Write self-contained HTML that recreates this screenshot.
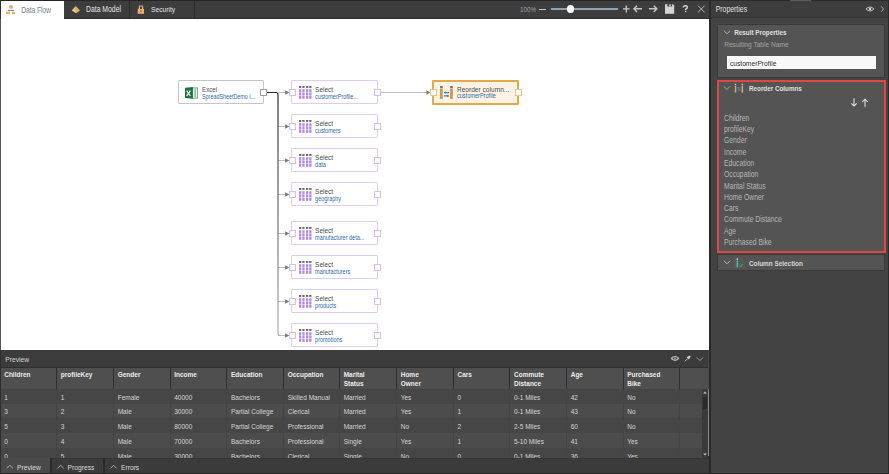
<!DOCTYPE html>
<html><head><meta charset="utf-8">
<style>
*{box-sizing:border-box;margin:0;padding:0}
html,body{width:889px;height:474px;overflow:hidden;background:#2d2d2d;font-family:"Liberation Sans",sans-serif}
.a{position:absolute}
.t{position:absolute;white-space:nowrap;line-height:1}
.node{position:absolute;background:#fff;border:1px solid #dccdf2;border-radius:1px}
.port{position:absolute;width:7px;height:7px;background:#fff;border:1px solid #9a9a9a}
.pp{border-color:#d3c0f0}
</style></head><body>
<div class="a" style="left:0px;top:0px;width:709px;height:19px;background:#3d3d3d;"></div>
<div class="a" style="left:0px;top:0px;width:709px;height:1px;background:#262626;"></div>
<div class="a" style="left:0px;top:18px;width:709px;height:1px;background:#2c2c2c;"></div>
<div class="a" style="left:1px;top:1px;width:63px;height:18px;background:#fff;"></div>
<div class="a" style="left:129px;top:1px;width:1px;height:17px;background:#2b2b2b;"></div>
<div class="a" style="left:194px;top:1px;width:1px;height:17px;background:#2b2b2b;"></div>
<svg class="a" style="left:5px;top:4px" width="12" height="11" viewBox="0 0 12 11">
 <circle cx="6" cy="2.9" r="1.95" fill="#eaa862"/>
 <rect x="2.8" y="5.8" width="6.2" height="1.3" fill="#8a8a8a"/>
 <rect x="1" y="7.8" width="3.9" height="2.2" fill="#eaa862"/>
 <rect x="7" y="7.8" width="3" height="2.2" fill="#eaa862"/>
</svg>
<div class="t" style="left:21.20px;top:7.51px;font-size:6.90px;color:#7a8593;font-weight:400;transform:scaleY(1.2);transform-origin:0 5.84px;letter-spacing:-0.15px">Data Flow</div>
<svg class="a" style="left:71px;top:5px" width="10" height="10" viewBox="0 0 10 10">
 <path d="M4.8 0.9 L0.7 5.4 L5.1 8.3 Z" fill="#eec687"/><path d="M4.8 0.9 L5.1 8.3 L9 5.4 Z" fill="#ddae70"/>
</svg>
<div class="t" style="left:86.00px;top:7.05px;font-size:6.85px;color:#e4e4e4;font-weight:400;transform:scaleY(1.2);transform-origin:0 5.80px;">Data Model</div>
<svg class="a" style="left:137px;top:5px" width="8" height="9" viewBox="0 0 8 9">
 <path d="M2.4 4 V1.7 Q2.4 1 3.1 1 H4.9 Q5.6 1 5.6 1.7 V4" stroke="#e8b070" stroke-width="1.2" fill="none"/>
 <rect x="0.7" y="3.8" width="6.3" height="5" fill="#e8b070"/><rect x="3.3" y="5.2" width="1.1" height="1.7" fill="#7a5a36"/>
</svg>
<div class="t" style="left:151.00px;top:7.18px;font-size:6.70px;color:#e4e4e4;font-weight:400;transform:scaleY(1.2);transform-origin:0 5.67px;">Security</div>
<div class="t" style="left:520.00px;top:7.02px;font-size:6.30px;color:#97a6b6;font-weight:400;transform:scaleY(1.2);transform-origin:0 5.33px;">100%</div>
<div class="a" style="left:539px;top:8.5px;width:7px;height:1.3px;background:#c4c4c4;"></div>
<div class="a" style="left:551px;top:8.3px;width:67px;height:1.7px;background:#8fa2b3;"></div>
<div class="a" style="left:566.6px;top:5.4px;width:7.4px;height:7.4px;border-radius:50%;background:#fff"></div>
<svg class="a" style="left:620px;top:3px" width="90" height="13" viewBox="0 0 90 13">
 <path d="M3 5.8 H9.6 M6.3 2.4 V9.6" stroke="#c8c8c8" stroke-width="1.3"/>
 <path d="M14 5.8 H22 M17 2.7 L14 5.8 L17 8.9" stroke="#c4c4c4" stroke-width="1.5" fill="none"/>
 <path d="M28.9 5.8 H36.8 M33.8 2.7 L36.8 5.8 L33.8 8.9" stroke="#c4c4c4" stroke-width="1.5" fill="none"/>
 <path d="M45 1.2 H53 L54.2 2.4 V10.8 H45 Z" fill="#d4d4d4"/><rect x="47.3" y="1.2" width="4.8" height="2.3" fill="#3d3d3d"/><rect x="49.2" y="1.5" width="1.6" height="1.8" fill="#d4d4d4"/>
 <path d="M63.3 4.5 Q63.3 2.7 65.3 2.7 Q67.3 2.7 67.3 4.4 Q67.3 5.5 65.6 6.2 V7.3" stroke="#d0d0d0" stroke-width="1.4" fill="none"/><rect x="64.9" y="8" width="1.5" height="1.2" fill="#d0d0d0"/>
 <path d="M78 2.7 L84.6 9.3 M84.6 2.7 L78 9.3" stroke="#c0c0c0" stroke-width="0.9"/>
</svg>
<div class="a" style="left:0px;top:19px;width:1px;height:331px;background:#3b3b3b;"></div>
<div class="a" style="left:1px;top:19px;width:708px;height:331px;background:#fff;"></div>
<svg class="a" style="left:0;top:0" width="709" height="474" viewBox="0 0 709 474">
<line x1="278" y1="92.5" x2="286" y2="92.5" stroke="#bdbdbd" stroke-width="1"/>
<path d="M285.2 90.2 L289.2 92.5 L285.2 94.8 Z" fill="#777"/>
<line x1="278" y1="126.5" x2="286" y2="126.5" stroke="#bdbdbd" stroke-width="1"/>
<path d="M285.2 124.2 L289.2 126.5 L285.2 128.8 Z" fill="#777"/>
<line x1="278" y1="160.5" x2="286" y2="160.5" stroke="#bdbdbd" stroke-width="1"/>
<path d="M285.2 158.2 L289.2 160.5 L285.2 162.8 Z" fill="#777"/>
<line x1="278" y1="194.5" x2="286" y2="194.5" stroke="#bdbdbd" stroke-width="1"/>
<path d="M285.2 192.2 L289.2 194.5 L285.2 196.8 Z" fill="#777"/>
<line x1="278" y1="233.5" x2="286" y2="233.5" stroke="#bdbdbd" stroke-width="1"/>
<path d="M285.2 231.2 L289.2 233.5 L285.2 235.8 Z" fill="#777"/>
<line x1="278" y1="267.5" x2="286" y2="267.5" stroke="#bdbdbd" stroke-width="1"/>
<path d="M285.2 265.2 L289.2 267.5 L285.2 269.8 Z" fill="#777"/>
<line x1="278" y1="301.5" x2="286" y2="301.5" stroke="#bdbdbd" stroke-width="1"/>
<path d="M285.2 299.2 L289.2 301.5 L285.2 303.8 Z" fill="#777"/>
<line x1="278" y1="335.5" x2="286" y2="335.5" stroke="#bdbdbd" stroke-width="1"/>
<path d="M285.2 333.2 L289.2 335.5 L285.2 337.8 Z" fill="#777"/>
<defs><linearGradient id="vg" gradientUnits="userSpaceOnUse" x1="0" y1="92" x2="0" y2="336"><stop offset="0" stop-color="#2a2a2a"/><stop offset="0.35" stop-color="#5a5a5a"/><stop offset="1" stop-color="#b0b0b0"/></linearGradient></defs>
<path d="M266.5 92.5 H276 Q278 92.5 278 94.5 V333.5 Q278 335.5 280 335.5" fill="none" stroke="url(#vg)" stroke-width="1.2"/>
<line x1="381" y1="92.5" x2="427" y2="92.5" stroke="#bdbdbd" stroke-width="1"/>
<path d="M426.5 90.2 L430.3 92.5 L426.5 94.8 Z" fill="#777"/>
</svg>
<div class="node sel" style="left:291px;top:80px;width:87px;height:24px"><svg class="a" style="left:6.7px;top:5.1px" width="14" height="14" viewBox="0 0 14 14">
 <g fill="#6a6a6a"><rect x="0" y="0" width="2.3" height="1.9"/><rect x="3.3" y="0" width="2.3" height="1.9"/><rect x="7" y="0" width="2.3" height="1.9"/><rect x="10.2" y="0" width="2.3" height="1.9"/></g>
 <g fill="#b28ade"><rect x="0" y="3.2" width="2.3" height="9.6"/><rect x="3.3" y="3.2" width="2.3" height="9.6"/><rect x="7" y="3.2" width="2.3" height="9.6"/><rect x="10.2" y="3.2" width="2.3" height="9.6"/></g>
 <g fill="#fff" opacity="0.55"><rect x="0" y="5.8" width="13" height="0.8"/><rect x="0" y="9" width="13" height="0.8"/></g>
</svg></div>
<div class="t" style="left:315.10px;top:86.95px;font-size:6.50px;color:#4a4a4a;font-weight:400;transform:scaleY(1.2);transform-origin:0 5.50px;">Select</div>
<div class="t" style="left:315.10px;top:94.79px;font-size:5.50px;color:#2e6ba6;font-weight:400;transform:scaleY(1.2);transform-origin:0 4.66px;">customerProfile...</div>
<div class="port pp" style="left:289px;top:89px"></div><div class="port pp" style="left:374px;top:89px"></div>
<div class="node sel" style="left:291px;top:114px;width:87px;height:24px"><svg class="a" style="left:6.7px;top:5.1px" width="14" height="14" viewBox="0 0 14 14">
 <g fill="#6a6a6a"><rect x="0" y="0" width="2.3" height="1.9"/><rect x="3.3" y="0" width="2.3" height="1.9"/><rect x="7" y="0" width="2.3" height="1.9"/><rect x="10.2" y="0" width="2.3" height="1.9"/></g>
 <g fill="#b28ade"><rect x="0" y="3.2" width="2.3" height="9.6"/><rect x="3.3" y="3.2" width="2.3" height="9.6"/><rect x="7" y="3.2" width="2.3" height="9.6"/><rect x="10.2" y="3.2" width="2.3" height="9.6"/></g>
 <g fill="#fff" opacity="0.55"><rect x="0" y="5.8" width="13" height="0.8"/><rect x="0" y="9" width="13" height="0.8"/></g>
</svg></div>
<div class="t" style="left:315.10px;top:120.95px;font-size:6.50px;color:#4a4a4a;font-weight:400;transform:scaleY(1.2);transform-origin:0 5.50px;">Select</div>
<div class="t" style="left:315.10px;top:128.79px;font-size:5.50px;color:#2e6ba6;font-weight:400;transform:scaleY(1.2);transform-origin:0 4.66px;">customers</div>
<div class="port pp" style="left:289px;top:123px"></div><div class="port pp" style="left:374px;top:123px"></div>
<div class="node sel" style="left:291px;top:148px;width:87px;height:24px"><svg class="a" style="left:6.7px;top:5.1px" width="14" height="14" viewBox="0 0 14 14">
 <g fill="#6a6a6a"><rect x="0" y="0" width="2.3" height="1.9"/><rect x="3.3" y="0" width="2.3" height="1.9"/><rect x="7" y="0" width="2.3" height="1.9"/><rect x="10.2" y="0" width="2.3" height="1.9"/></g>
 <g fill="#b28ade"><rect x="0" y="3.2" width="2.3" height="9.6"/><rect x="3.3" y="3.2" width="2.3" height="9.6"/><rect x="7" y="3.2" width="2.3" height="9.6"/><rect x="10.2" y="3.2" width="2.3" height="9.6"/></g>
 <g fill="#fff" opacity="0.55"><rect x="0" y="5.8" width="13" height="0.8"/><rect x="0" y="9" width="13" height="0.8"/></g>
</svg></div>
<div class="t" style="left:315.10px;top:154.95px;font-size:6.50px;color:#4a4a4a;font-weight:400;transform:scaleY(1.2);transform-origin:0 5.50px;">Select</div>
<div class="t" style="left:315.10px;top:162.79px;font-size:5.50px;color:#2e6ba6;font-weight:400;transform:scaleY(1.2);transform-origin:0 4.66px;">data</div>
<div class="port pp" style="left:289px;top:157px"></div><div class="port pp" style="left:374px;top:157px"></div>
<div class="node sel" style="left:291px;top:182px;width:87px;height:24px"><svg class="a" style="left:6.7px;top:5.1px" width="14" height="14" viewBox="0 0 14 14">
 <g fill="#6a6a6a"><rect x="0" y="0" width="2.3" height="1.9"/><rect x="3.3" y="0" width="2.3" height="1.9"/><rect x="7" y="0" width="2.3" height="1.9"/><rect x="10.2" y="0" width="2.3" height="1.9"/></g>
 <g fill="#b28ade"><rect x="0" y="3.2" width="2.3" height="9.6"/><rect x="3.3" y="3.2" width="2.3" height="9.6"/><rect x="7" y="3.2" width="2.3" height="9.6"/><rect x="10.2" y="3.2" width="2.3" height="9.6"/></g>
 <g fill="#fff" opacity="0.55"><rect x="0" y="5.8" width="13" height="0.8"/><rect x="0" y="9" width="13" height="0.8"/></g>
</svg></div>
<div class="t" style="left:315.10px;top:188.95px;font-size:6.50px;color:#4a4a4a;font-weight:400;transform:scaleY(1.2);transform-origin:0 5.50px;">Select</div>
<div class="t" style="left:315.10px;top:196.79px;font-size:5.50px;color:#2e6ba6;font-weight:400;transform:scaleY(1.2);transform-origin:0 4.66px;">geography</div>
<div class="port pp" style="left:289px;top:191px"></div><div class="port pp" style="left:374px;top:191px"></div>
<div class="node sel" style="left:291px;top:221px;width:87px;height:24px"><svg class="a" style="left:6.7px;top:5.1px" width="14" height="14" viewBox="0 0 14 14">
 <g fill="#6a6a6a"><rect x="0" y="0" width="2.3" height="1.9"/><rect x="3.3" y="0" width="2.3" height="1.9"/><rect x="7" y="0" width="2.3" height="1.9"/><rect x="10.2" y="0" width="2.3" height="1.9"/></g>
 <g fill="#b28ade"><rect x="0" y="3.2" width="2.3" height="9.6"/><rect x="3.3" y="3.2" width="2.3" height="9.6"/><rect x="7" y="3.2" width="2.3" height="9.6"/><rect x="10.2" y="3.2" width="2.3" height="9.6"/></g>
 <g fill="#fff" opacity="0.55"><rect x="0" y="5.8" width="13" height="0.8"/><rect x="0" y="9" width="13" height="0.8"/></g>
</svg></div>
<div class="t" style="left:315.10px;top:227.95px;font-size:6.50px;color:#4a4a4a;font-weight:400;transform:scaleY(1.2);transform-origin:0 5.50px;">Select</div>
<div class="t" style="left:315.10px;top:235.79px;font-size:5.50px;color:#2e6ba6;font-weight:400;transform:scaleY(1.2);transform-origin:0 4.66px;">manufacturer deta...</div>
<div class="port pp" style="left:289px;top:230px"></div><div class="port pp" style="left:374px;top:230px"></div>
<div class="node sel" style="left:291px;top:255px;width:87px;height:24px"><svg class="a" style="left:6.7px;top:5.1px" width="14" height="14" viewBox="0 0 14 14">
 <g fill="#6a6a6a"><rect x="0" y="0" width="2.3" height="1.9"/><rect x="3.3" y="0" width="2.3" height="1.9"/><rect x="7" y="0" width="2.3" height="1.9"/><rect x="10.2" y="0" width="2.3" height="1.9"/></g>
 <g fill="#b28ade"><rect x="0" y="3.2" width="2.3" height="9.6"/><rect x="3.3" y="3.2" width="2.3" height="9.6"/><rect x="7" y="3.2" width="2.3" height="9.6"/><rect x="10.2" y="3.2" width="2.3" height="9.6"/></g>
 <g fill="#fff" opacity="0.55"><rect x="0" y="5.8" width="13" height="0.8"/><rect x="0" y="9" width="13" height="0.8"/></g>
</svg></div>
<div class="t" style="left:315.10px;top:261.95px;font-size:6.50px;color:#4a4a4a;font-weight:400;transform:scaleY(1.2);transform-origin:0 5.50px;">Select</div>
<div class="t" style="left:315.10px;top:269.79px;font-size:5.50px;color:#2e6ba6;font-weight:400;transform:scaleY(1.2);transform-origin:0 4.66px;">manufacturers</div>
<div class="port pp" style="left:289px;top:264px"></div><div class="port pp" style="left:374px;top:264px"></div>
<div class="node sel" style="left:291px;top:289px;width:87px;height:24px"><svg class="a" style="left:6.7px;top:5.1px" width="14" height="14" viewBox="0 0 14 14">
 <g fill="#6a6a6a"><rect x="0" y="0" width="2.3" height="1.9"/><rect x="3.3" y="0" width="2.3" height="1.9"/><rect x="7" y="0" width="2.3" height="1.9"/><rect x="10.2" y="0" width="2.3" height="1.9"/></g>
 <g fill="#b28ade"><rect x="0" y="3.2" width="2.3" height="9.6"/><rect x="3.3" y="3.2" width="2.3" height="9.6"/><rect x="7" y="3.2" width="2.3" height="9.6"/><rect x="10.2" y="3.2" width="2.3" height="9.6"/></g>
 <g fill="#fff" opacity="0.55"><rect x="0" y="5.8" width="13" height="0.8"/><rect x="0" y="9" width="13" height="0.8"/></g>
</svg></div>
<div class="t" style="left:315.10px;top:295.95px;font-size:6.50px;color:#4a4a4a;font-weight:400;transform:scaleY(1.2);transform-origin:0 5.50px;">Select</div>
<div class="t" style="left:315.10px;top:303.79px;font-size:5.50px;color:#2e6ba6;font-weight:400;transform:scaleY(1.2);transform-origin:0 4.66px;">products</div>
<div class="port pp" style="left:289px;top:298px"></div><div class="port pp" style="left:374px;top:298px"></div>
<div class="node sel" style="left:291px;top:323px;width:87px;height:24px"><svg class="a" style="left:6.7px;top:5.1px" width="14" height="14" viewBox="0 0 14 14">
 <g fill="#6a6a6a"><rect x="0" y="0" width="2.3" height="1.9"/><rect x="3.3" y="0" width="2.3" height="1.9"/><rect x="7" y="0" width="2.3" height="1.9"/><rect x="10.2" y="0" width="2.3" height="1.9"/></g>
 <g fill="#b28ade"><rect x="0" y="3.2" width="2.3" height="9.6"/><rect x="3.3" y="3.2" width="2.3" height="9.6"/><rect x="7" y="3.2" width="2.3" height="9.6"/><rect x="10.2" y="3.2" width="2.3" height="9.6"/></g>
 <g fill="#fff" opacity="0.55"><rect x="0" y="5.8" width="13" height="0.8"/><rect x="0" y="9" width="13" height="0.8"/></g>
</svg></div>
<div class="t" style="left:315.10px;top:329.95px;font-size:6.50px;color:#4a4a4a;font-weight:400;transform:scaleY(1.2);transform-origin:0 5.50px;">Select</div>
<div class="t" style="left:315.10px;top:337.79px;font-size:5.50px;color:#2e6ba6;font-weight:400;transform:scaleY(1.2);transform-origin:0 4.66px;">promotions</div>
<div class="port pp" style="left:289px;top:332px"></div><div class="port pp" style="left:374px;top:332px"></div>
<div class="node" style="left:178px;top:80px;width:86px;height:24px;border-color:#c6c6c6">
 <svg class="a" style="left:6px;top:5.5px" width="14" height="13" viewBox="0 0 14 13">
  <rect x="7.4" y="0.9" width="5.3" height="10.2" fill="#e3efe7" stroke="#4f8f6a" stroke-width="0.7"/>
  <rect x="9.3" y="1.6" width="1.6" height="8.8" fill="#9cc3ab"/>
  <path d="M0 0.8 L7.8 0 V11.8 L0 11 Z" fill="#217346"/>
  <path d="M1.7 3.7 L5.4 8.9 M5.4 3.7 L1.7 8.9" stroke="#fff" stroke-width="1.15"/>
 </svg></div>
<div class="t" style="left:202.00px;top:87.10px;font-size:6.20px;color:#505050;font-weight:400;transform:scaleY(1.2);transform-origin:0 5.25px;">Excel</div>
<div class="t" style="left:202.00px;top:94.68px;font-size:5.40px;color:#2e6ba6;font-weight:400;transform:scaleY(1.2);transform-origin:0 4.57px;">SpreadSheetDemo I...</div>
<div class="port" style="left:260px;top:89px;border-color:#a0a0a0"></div>
<div class="node" style="left:432px;top:80px;width:87px;height:25px;background:#fdf3e4;border:2px solid #e6a84c">
 <svg class="a" style="left:6px;top:4px" width="15" height="14" viewBox="0 0 15 14">
  <rect x="0" y="0" width="2.75" height="2.4" fill="#7a7a7a"/><rect x="10.1" y="0" width="2.8" height="2.4" fill="#7a7a7a"/>
  <rect x="0" y="3" width="2.75" height="9.9" fill="#d9944c"/><rect x="10.1" y="3" width="2.8" height="9.9" fill="#d9944c"/>
  <path d="M4.6 6.6 H9.1 M3.9 9.9 H8.4" stroke="#2b88d0" stroke-width="1.2"/>
  <path d="M3.7 6.6 L5.8 5.3 V7.9 Z M9.3 9.9 L7.2 8.6 V11.2 Z" fill="#2b88d0"/>
 </svg></div>
<div class="t" style="left:456.90px;top:86.66px;font-size:6.60px;color:#505050;font-weight:400;transform:scaleY(1.2);transform-origin:0 5.59px;">Reorder column...</div>
<div class="t" style="left:456.90px;top:94.31px;font-size:5.60px;color:#2e6ba6;font-weight:400;transform:scaleY(1.2);transform-origin:0 4.74px;">customerProfile</div>
<div class="port" style="left:430px;top:89px;border-color:#eec48a"></div>
<div class="port" style="left:515px;top:89px;border-color:#eec48a"></div>
<div class="a" style="left:0px;top:350px;width:709px;height:17px;background:#3c3c3c;"></div>
<div class="a" style="left:0px;top:366.5px;width:709px;height:1.5px;background:#2e2e2e;"></div>
<div class="t" style="left:5.30px;top:356.88px;font-size:6.70px;color:#d4d4d4;font-weight:400;transform:scaleY(1.2);transform-origin:0 5.67px;">Preview</div>
<svg class="a" style="left:668px;top:352px" width="40" height="13" viewBox="0 0 40 13">
 <path d="M2.9 6.4 Q7 2.4 11.1 6.4 Q7 10.4 2.9 6.4 Z" fill="#a8a8a8" stroke="#c8c8c8" stroke-width="0.8"/><ellipse cx="7" cy="6.4" rx="2.3" ry="1.1" fill="#4a4a4a"/><circle cx="7" cy="6.4" r="0.7" fill="#ccc"/>
 <path d="M18.6 5.2 L21.9 3.4 L22.7 4.3 L21 7.5 Z" fill="#cfcfcf"/><path d="M19.9 6.3 L16.9 9.3" stroke="#c8c8c8" stroke-width="0.9"/>
 <path d="M28.7 5.4 L31.9 8.6 L35.1 5.4" stroke="#bcbcbc" stroke-width="0.75" fill="none"/>
</svg>
<div class="a" style="left:0px;top:368px;width:708px;height:21px;background:#4f4f4f;"></div>
<div class="a" style="left:708px;top:350px;width:1px;height:39px;background:#4a4a4a;"></div>
<div class="a" style="left:0;top:389px;width:702px;height:14.7px;background:#464646"></div>
<div class="a" style="left:0;top:403.7px;width:702px;height:14.7px;background:#4c4c4c"></div>
<div class="a" style="left:0;top:418.4px;width:702px;height:14.7px;background:#464646"></div>
<div class="a" style="left:0;top:433.1px;width:702px;height:14.7px;background:#4c4c4c"></div>
<div class="a" style="left:0;top:447.8px;width:702px;height:11px;background:#464646"></div>
<div class="a" style="left:56.0px;top:368px;width:1px;height:21px;background:#2e2e2e"></div>
<div class="a" style="left:56.0px;top:389px;width:1px;height:69px;background:#444444"></div>
<div class="a" style="left:113.0px;top:368px;width:1px;height:21px;background:#2e2e2e"></div>
<div class="a" style="left:113.0px;top:389px;width:1px;height:69px;background:#444444"></div>
<div class="a" style="left:169.5px;top:368px;width:1px;height:21px;background:#2e2e2e"></div>
<div class="a" style="left:169.5px;top:389px;width:1px;height:69px;background:#444444"></div>
<div class="a" style="left:226.3px;top:368px;width:1px;height:21px;background:#2e2e2e"></div>
<div class="a" style="left:226.3px;top:389px;width:1px;height:69px;background:#444444"></div>
<div class="a" style="left:283.0px;top:368px;width:1px;height:21px;background:#2e2e2e"></div>
<div class="a" style="left:283.0px;top:389px;width:1px;height:69px;background:#444444"></div>
<div class="a" style="left:339.0px;top:368px;width:1px;height:21px;background:#2e2e2e"></div>
<div class="a" style="left:339.0px;top:389px;width:1px;height:69px;background:#444444"></div>
<div class="a" style="left:396.0px;top:368px;width:1px;height:21px;background:#2e2e2e"></div>
<div class="a" style="left:396.0px;top:389px;width:1px;height:69px;background:#444444"></div>
<div class="a" style="left:452.8px;top:368px;width:1px;height:21px;background:#2e2e2e"></div>
<div class="a" style="left:452.8px;top:389px;width:1px;height:69px;background:#444444"></div>
<div class="a" style="left:509.3px;top:368px;width:1px;height:21px;background:#2e2e2e"></div>
<div class="a" style="left:509.3px;top:389px;width:1px;height:69px;background:#444444"></div>
<div class="a" style="left:566.0px;top:368px;width:1px;height:21px;background:#2e2e2e"></div>
<div class="a" style="left:566.0px;top:389px;width:1px;height:69px;background:#444444"></div>
<div class="a" style="left:622.5px;top:368px;width:1px;height:21px;background:#2e2e2e"></div>
<div class="a" style="left:622.5px;top:389px;width:1px;height:69px;background:#444444"></div>
<div class="a" style="left:679.2px;top:368px;width:1px;height:21px;background:#2e2e2e"></div>
<div class="a" style="left:679.2px;top:389px;width:1px;height:69px;background:#444444"></div>
<div class="t" style="left:4.20px;top:371.65px;font-size:6.50px;color:#ececec;font-weight:700;transform:scaleY(1.12);transform-origin:0 5.50px;">Children</div>
<div class="t" style="left:60.70px;top:371.65px;font-size:6.50px;color:#ececec;font-weight:700;transform:scaleY(1.12);transform-origin:0 5.50px;">profileKey</div>
<div class="t" style="left:117.70px;top:371.65px;font-size:6.50px;color:#ececec;font-weight:700;transform:scaleY(1.12);transform-origin:0 5.50px;">Gender</div>
<div class="t" style="left:174.20px;top:371.65px;font-size:6.50px;color:#ececec;font-weight:700;transform:scaleY(1.12);transform-origin:0 5.50px;">Income</div>
<div class="t" style="left:231.00px;top:371.65px;font-size:6.50px;color:#ececec;font-weight:700;transform:scaleY(1.12);transform-origin:0 5.50px;">Education</div>
<div class="t" style="left:287.70px;top:371.65px;font-size:6.50px;color:#ececec;font-weight:700;transform:scaleY(1.12);transform-origin:0 5.50px;">Occupation</div>
<div class="t" style="left:343.70px;top:371.65px;font-size:6.50px;color:#ececec;font-weight:700;transform:scaleY(1.12);transform-origin:0 5.50px;">Marital</div>
<div class="t" style="left:343.70px;top:380.75px;font-size:6.50px;color:#ececec;font-weight:700;transform:scaleY(1.12);transform-origin:0 5.50px;">Status</div>
<div class="t" style="left:400.70px;top:371.65px;font-size:6.50px;color:#ececec;font-weight:700;transform:scaleY(1.12);transform-origin:0 5.50px;">Home</div>
<div class="t" style="left:400.70px;top:380.75px;font-size:6.50px;color:#ececec;font-weight:700;transform:scaleY(1.12);transform-origin:0 5.50px;">Owner</div>
<div class="t" style="left:457.50px;top:371.65px;font-size:6.50px;color:#ececec;font-weight:700;transform:scaleY(1.12);transform-origin:0 5.50px;">Cars</div>
<div class="t" style="left:514.00px;top:371.65px;font-size:6.50px;color:#ececec;font-weight:700;transform:scaleY(1.12);transform-origin:0 5.50px;">Commute</div>
<div class="t" style="left:514.00px;top:380.75px;font-size:6.50px;color:#ececec;font-weight:700;transform:scaleY(1.12);transform-origin:0 5.50px;">Distance</div>
<div class="t" style="left:570.70px;top:371.65px;font-size:6.50px;color:#ececec;font-weight:700;transform:scaleY(1.12);transform-origin:0 5.50px;">Age</div>
<div class="t" style="left:627.20px;top:371.65px;font-size:6.50px;color:#ececec;font-weight:700;transform:scaleY(1.12);transform-origin:0 5.50px;">Purchased</div>
<div class="t" style="left:627.20px;top:380.75px;font-size:6.50px;color:#ececec;font-weight:700;transform:scaleY(1.12);transform-origin:0 5.50px;">Bike</div>
<div class="a" style="left:0;top:389px;width:702px;height:69px;overflow:hidden">
<div class="t" style="left:4.20px;top:5.75px;font-size:6.50px;color:#d6d6d6;font-weight:400;transform:scaleY(1.2);transform-origin:0 5.50px;">1</div>
<div class="t" style="left:60.70px;top:5.75px;font-size:6.50px;color:#d6d6d6;font-weight:400;transform:scaleY(1.2);transform-origin:0 5.50px;">1</div>
<div class="t" style="left:117.70px;top:5.75px;font-size:6.50px;color:#d6d6d6;font-weight:400;transform:scaleY(1.2);transform-origin:0 5.50px;">Female</div>
<div class="t" style="left:174.20px;top:5.75px;font-size:6.50px;color:#d6d6d6;font-weight:400;transform:scaleY(1.2);transform-origin:0 5.50px;">40000</div>
<div class="t" style="left:231.00px;top:5.75px;font-size:6.50px;color:#d6d6d6;font-weight:400;transform:scaleY(1.2);transform-origin:0 5.50px;">Bachelors</div>
<div class="t" style="left:287.70px;top:5.75px;font-size:6.50px;color:#d6d6d6;font-weight:400;transform:scaleY(1.2);transform-origin:0 5.50px;">Skilled Manual</div>
<div class="t" style="left:343.70px;top:5.75px;font-size:6.50px;color:#d6d6d6;font-weight:400;transform:scaleY(1.2);transform-origin:0 5.50px;">Married</div>
<div class="t" style="left:400.70px;top:5.75px;font-size:6.50px;color:#d6d6d6;font-weight:400;transform:scaleY(1.2);transform-origin:0 5.50px;">Yes</div>
<div class="t" style="left:457.50px;top:5.75px;font-size:6.50px;color:#d6d6d6;font-weight:400;transform:scaleY(1.2);transform-origin:0 5.50px;">0</div>
<div class="t" style="left:514.00px;top:5.75px;font-size:6.50px;color:#d6d6d6;font-weight:400;transform:scaleY(1.2);transform-origin:0 5.50px;">0-1 Miles</div>
<div class="t" style="left:570.70px;top:5.75px;font-size:6.50px;color:#d6d6d6;font-weight:400;transform:scaleY(1.2);transform-origin:0 5.50px;">42</div>
<div class="t" style="left:627.20px;top:5.75px;font-size:6.50px;color:#d6d6d6;font-weight:400;transform:scaleY(1.2);transform-origin:0 5.50px;">No</div>
<div class="t" style="left:4.20px;top:20.45px;font-size:6.50px;color:#d6d6d6;font-weight:400;transform:scaleY(1.2);transform-origin:0 5.50px;">3</div>
<div class="t" style="left:60.70px;top:20.45px;font-size:6.50px;color:#d6d6d6;font-weight:400;transform:scaleY(1.2);transform-origin:0 5.50px;">2</div>
<div class="t" style="left:117.70px;top:20.45px;font-size:6.50px;color:#d6d6d6;font-weight:400;transform:scaleY(1.2);transform-origin:0 5.50px;">Male</div>
<div class="t" style="left:174.20px;top:20.45px;font-size:6.50px;color:#d6d6d6;font-weight:400;transform:scaleY(1.2);transform-origin:0 5.50px;">30000</div>
<div class="t" style="left:231.00px;top:20.45px;font-size:6.50px;color:#d6d6d6;font-weight:400;transform:scaleY(1.2);transform-origin:0 5.50px;">Partial College</div>
<div class="t" style="left:287.70px;top:20.45px;font-size:6.50px;color:#d6d6d6;font-weight:400;transform:scaleY(1.2);transform-origin:0 5.50px;">Clerical</div>
<div class="t" style="left:343.70px;top:20.45px;font-size:6.50px;color:#d6d6d6;font-weight:400;transform:scaleY(1.2);transform-origin:0 5.50px;">Married</div>
<div class="t" style="left:400.70px;top:20.45px;font-size:6.50px;color:#d6d6d6;font-weight:400;transform:scaleY(1.2);transform-origin:0 5.50px;">Yes</div>
<div class="t" style="left:457.50px;top:20.45px;font-size:6.50px;color:#d6d6d6;font-weight:400;transform:scaleY(1.2);transform-origin:0 5.50px;">1</div>
<div class="t" style="left:514.00px;top:20.45px;font-size:6.50px;color:#d6d6d6;font-weight:400;transform:scaleY(1.2);transform-origin:0 5.50px;">0-1 Miles</div>
<div class="t" style="left:570.70px;top:20.45px;font-size:6.50px;color:#d6d6d6;font-weight:400;transform:scaleY(1.2);transform-origin:0 5.50px;">43</div>
<div class="t" style="left:627.20px;top:20.45px;font-size:6.50px;color:#d6d6d6;font-weight:400;transform:scaleY(1.2);transform-origin:0 5.50px;">No</div>
<div class="t" style="left:4.20px;top:35.15px;font-size:6.50px;color:#d6d6d6;font-weight:400;transform:scaleY(1.2);transform-origin:0 5.50px;">5</div>
<div class="t" style="left:60.70px;top:35.15px;font-size:6.50px;color:#d6d6d6;font-weight:400;transform:scaleY(1.2);transform-origin:0 5.50px;">3</div>
<div class="t" style="left:117.70px;top:35.15px;font-size:6.50px;color:#d6d6d6;font-weight:400;transform:scaleY(1.2);transform-origin:0 5.50px;">Male</div>
<div class="t" style="left:174.20px;top:35.15px;font-size:6.50px;color:#d6d6d6;font-weight:400;transform:scaleY(1.2);transform-origin:0 5.50px;">80000</div>
<div class="t" style="left:231.00px;top:35.15px;font-size:6.50px;color:#d6d6d6;font-weight:400;transform:scaleY(1.2);transform-origin:0 5.50px;">Partial College</div>
<div class="t" style="left:287.70px;top:35.15px;font-size:6.50px;color:#d6d6d6;font-weight:400;transform:scaleY(1.2);transform-origin:0 5.50px;">Professional</div>
<div class="t" style="left:343.70px;top:35.15px;font-size:6.50px;color:#d6d6d6;font-weight:400;transform:scaleY(1.2);transform-origin:0 5.50px;">Married</div>
<div class="t" style="left:400.70px;top:35.15px;font-size:6.50px;color:#d6d6d6;font-weight:400;transform:scaleY(1.2);transform-origin:0 5.50px;">No</div>
<div class="t" style="left:457.50px;top:35.15px;font-size:6.50px;color:#d6d6d6;font-weight:400;transform:scaleY(1.2);transform-origin:0 5.50px;">2</div>
<div class="t" style="left:514.00px;top:35.15px;font-size:6.50px;color:#d6d6d6;font-weight:400;transform:scaleY(1.2);transform-origin:0 5.50px;">2-5 Miles</div>
<div class="t" style="left:570.70px;top:35.15px;font-size:6.50px;color:#d6d6d6;font-weight:400;transform:scaleY(1.2);transform-origin:0 5.50px;">60</div>
<div class="t" style="left:627.20px;top:35.15px;font-size:6.50px;color:#d6d6d6;font-weight:400;transform:scaleY(1.2);transform-origin:0 5.50px;">No</div>
<div class="t" style="left:4.20px;top:49.85px;font-size:6.50px;color:#d6d6d6;font-weight:400;transform:scaleY(1.2);transform-origin:0 5.50px;">0</div>
<div class="t" style="left:60.70px;top:49.85px;font-size:6.50px;color:#d6d6d6;font-weight:400;transform:scaleY(1.2);transform-origin:0 5.50px;">4</div>
<div class="t" style="left:117.70px;top:49.85px;font-size:6.50px;color:#d6d6d6;font-weight:400;transform:scaleY(1.2);transform-origin:0 5.50px;">Male</div>
<div class="t" style="left:174.20px;top:49.85px;font-size:6.50px;color:#d6d6d6;font-weight:400;transform:scaleY(1.2);transform-origin:0 5.50px;">70000</div>
<div class="t" style="left:231.00px;top:49.85px;font-size:6.50px;color:#d6d6d6;font-weight:400;transform:scaleY(1.2);transform-origin:0 5.50px;">Bachelors</div>
<div class="t" style="left:287.70px;top:49.85px;font-size:6.50px;color:#d6d6d6;font-weight:400;transform:scaleY(1.2);transform-origin:0 5.50px;">Professional</div>
<div class="t" style="left:343.70px;top:49.85px;font-size:6.50px;color:#d6d6d6;font-weight:400;transform:scaleY(1.2);transform-origin:0 5.50px;">Single</div>
<div class="t" style="left:400.70px;top:49.85px;font-size:6.50px;color:#d6d6d6;font-weight:400;transform:scaleY(1.2);transform-origin:0 5.50px;">Yes</div>
<div class="t" style="left:457.50px;top:49.85px;font-size:6.50px;color:#d6d6d6;font-weight:400;transform:scaleY(1.2);transform-origin:0 5.50px;">1</div>
<div class="t" style="left:514.00px;top:49.85px;font-size:6.50px;color:#d6d6d6;font-weight:400;transform:scaleY(1.2);transform-origin:0 5.50px;">5-10 Miles</div>
<div class="t" style="left:570.70px;top:49.85px;font-size:6.50px;color:#d6d6d6;font-weight:400;transform:scaleY(1.2);transform-origin:0 5.50px;">41</div>
<div class="t" style="left:627.20px;top:49.85px;font-size:6.50px;color:#d6d6d6;font-weight:400;transform:scaleY(1.2);transform-origin:0 5.50px;">Yes</div>
<div class="t" style="left:4.20px;top:64.55px;font-size:6.50px;color:#d6d6d6;font-weight:400;transform:scaleY(1.2);transform-origin:0 5.50px;">0</div>
<div class="t" style="left:60.70px;top:64.55px;font-size:6.50px;color:#d6d6d6;font-weight:400;transform:scaleY(1.2);transform-origin:0 5.50px;">5</div>
<div class="t" style="left:117.70px;top:64.55px;font-size:6.50px;color:#d6d6d6;font-weight:400;transform:scaleY(1.2);transform-origin:0 5.50px;">Male</div>
<div class="t" style="left:174.20px;top:64.55px;font-size:6.50px;color:#d6d6d6;font-weight:400;transform:scaleY(1.2);transform-origin:0 5.50px;">30000</div>
<div class="t" style="left:231.00px;top:64.55px;font-size:6.50px;color:#d6d6d6;font-weight:400;transform:scaleY(1.2);transform-origin:0 5.50px;">Bachelors</div>
<div class="t" style="left:287.70px;top:64.55px;font-size:6.50px;color:#d6d6d6;font-weight:400;transform:scaleY(1.2);transform-origin:0 5.50px;">Clerical</div>
<div class="t" style="left:343.70px;top:64.55px;font-size:6.50px;color:#d6d6d6;font-weight:400;transform:scaleY(1.2);transform-origin:0 5.50px;">Single</div>
<div class="t" style="left:400.70px;top:64.55px;font-size:6.50px;color:#d6d6d6;font-weight:400;transform:scaleY(1.2);transform-origin:0 5.50px;">No</div>
<div class="t" style="left:457.50px;top:64.55px;font-size:6.50px;color:#d6d6d6;font-weight:400;transform:scaleY(1.2);transform-origin:0 5.50px;">0</div>
<div class="t" style="left:514.00px;top:64.55px;font-size:6.50px;color:#d6d6d6;font-weight:400;transform:scaleY(1.2);transform-origin:0 5.50px;">0-1 Miles</div>
<div class="t" style="left:570.70px;top:64.55px;font-size:6.50px;color:#d6d6d6;font-weight:400;transform:scaleY(1.2);transform-origin:0 5.50px;">36</div>
<div class="t" style="left:627.20px;top:64.55px;font-size:6.50px;color:#d6d6d6;font-weight:400;transform:scaleY(1.2);transform-origin:0 5.50px;">Yes</div>
</div>
<div class="a" style="left:702px;top:389px;width:6px;height:69px;background:#3a3a3a;"></div>
<svg class="a" style="left:702px;top:389px" width="6" height="69" viewBox="0 0 6 69"><path d="M1 4.5 L3 2.5 L5 4.5 Z M1 64.5 L3 66.5 L5 64.5 Z" fill="#bbb"/></svg>
<div class="a" style="left:703px;top:397px;width:4px;height:12px;background:#2a2a2a;"></div>
<div class="a" style="left:708px;top:389px;width:1px;height:67px;background:#8a8a8a;"></div>
<div class="a" style="left:0px;top:458px;width:709px;height:16px;background:#3b3b3b;"></div>
<div class="a" style="left:0px;top:458px;width:709px;height:1px;background:#353535;"></div>
<div class="a" style="left:0px;top:458px;width:50px;height:16px;background:#4a4a4a;"></div>
<div class="a" style="left:50px;top:458px;width:1.5px;height:16px;background:#2b2b2b;"></div>
<div class="a" style="left:103px;top:458px;width:1.5px;height:16px;background:#2b2b2b;"></div>
<div class="t" style="left:17.00px;top:464.88px;font-size:6.70px;color:#dcdcdc;font-weight:400;transform:scaleY(1.2);transform-origin:0 5.67px;">Preview</div>
<div class="t" style="left:67.60px;top:464.88px;font-size:6.70px;color:#dcdcdc;font-weight:400;transform:scaleY(1.2);transform-origin:0 5.67px;">Progress</div>
<div class="t" style="left:121.00px;top:464.88px;font-size:6.70px;color:#dcdcdc;font-weight:400;transform:scaleY(1.2);transform-origin:0 5.67px;">Errors</div>
<svg class="a" style="left:0;top:458px" width="130" height="16" viewBox="0 0 130 16"><path d="M6.8 10.4 L9.9 7.3 L13 10.4 M57.6 10.4 L60.7 7.3 L63.8 10.4 M110.5 10.4 L113.6 7.3 L116.7 10.4" stroke="#c4c4c4" stroke-width="0.8" fill="none"/></svg>
<div class="a" style="left:709px;top:0px;width:2px;height:474px;background:#2a2a2a;"></div>
<div class="a" style="left:711px;top:0px;width:178px;height:474px;background:#434343;"></div>
<div class="a" style="left:711px;top:0px;width:178px;height:17px;background:#3d3d3d;"></div>
<div class="a" style="left:711px;top:17px;width:178px;height:1px;background:#353535;"></div>
<div class="t" style="left:715.70px;top:6.81px;font-size:6.90px;color:#e0e0e0;font-weight:400;transform:scaleY(1.2);transform-origin:0 5.84px;">Properties</div>
<svg class="a" style="left:864px;top:4px" width="24" height="10" viewBox="0 0 24 10">
 <path d="M2 5 Q6 1 10 5 Q6 9 2 5 Z" fill="none" stroke="#cfcfcf" stroke-width="0.9"/><circle cx="6" cy="5" r="1.3" fill="#cfcfcf"/>
 <path d="M17.3 2.4 L19.5 5 L17.3 7.6" stroke="#bdbdbd" stroke-width="0.9" fill="none"/>
</svg>
<div class="a" style="left:717px;top:24px;width:168px;height:54px;background:#545454;border:1px solid #393939"></div>
<svg class="a" style="left:722px;top:28px" width="10" height="8" viewBox="0 0 10 8"><path d="M2 2.8 L5 5.8 L8 2.8" stroke="#bdbdbd" stroke-width="0.9" fill="none"/></svg>
<div class="t" style="left:734.30px;top:30.02px;font-size:6.30px;color:#e0e0e0;font-weight:700;transform:scaleY(1.12);transform-origin:0 5.33px;">Result Properties</div>
<div class="t" style="left:724.20px;top:41.96px;font-size:6.60px;color:#a4a4a4;font-weight:400;transform:scaleY(1.2);transform-origin:0 5.59px;">Resulting Table Name</div>
<div class="a" style="left:727px;top:56px;width:149px;height:13px;background:#f8f8f8;"></div>
<div class="t" style="left:729.90px;top:60.68px;font-size:6.70px;color:#2e2e2e;font-weight:400;transform:scaleY(1.2);transform-origin:0 5.67px;">customerProfile</div>
<div class="a" style="left:717px;top:80px;width:169px;height:173px;background:#545454;border:2px solid #e04844"></div>
<svg class="a" style="left:722px;top:84px" width="10" height="8" viewBox="0 0 10 8"><path d="M1.8 2.4 L4.9 5.6 L8 2.4" stroke="#b8b8b8" stroke-width="0.8" fill="none"/></svg>
<svg class="a" style="left:734px;top:83px" width="11" height="10" viewBox="0 0 11 10">
 <rect x="0.8" y="0.7" width="1.4" height="1.3" fill="#c4c4c4"/><rect x="7.6" y="0.7" width="1.5" height="1.3" fill="#c4c4c4"/>
 <rect x="0.8" y="2.6" width="1.4" height="7" fill="#e6a55e"/><rect x="7.6" y="2.6" width="1.5" height="7" fill="#e6a55e"/>
 <path d="M3.5 4.9 H6.7 M3.2 7 H6.4" stroke="#4a9ad8" stroke-width="0.8"/><path d="M3 4.9 L4.4 4.1 V5.7 Z M6.9 7 L5.5 6.2 V7.8 Z" fill="#4a9ad8"/>
</svg>
<div class="t" style="left:749.00px;top:86.12px;font-size:6.30px;color:#e0e0e0;font-weight:700;transform:scaleY(1.12);transform-origin:0 5.33px;">Reorder Columns</div>
<svg class="a" style="left:849px;top:97px" width="22" height="11" viewBox="0 0 22 11">
 <path d="M5 1.2 V9 M2.3 6.3 L5 9 L7.7 6.3" stroke="#dcdcdc" stroke-width="1.1" fill="none"/>
 <path d="M16 2.2 V9.8 M13.3 4.9 L16 2.2 L18.7 4.9" stroke="#dcdcdc" stroke-width="1.1" fill="none"/>
</svg>
<div class="t" style="left:724.00px;top:115.79px;font-size:6.80px;color:#b6b6b6;font-weight:400;transform:scaleY(1.2);transform-origin:0 5.76px;">Children</div>
<div class="t" style="left:724.00px;top:127.09px;font-size:6.80px;color:#b6b6b6;font-weight:400;transform:scaleY(1.2);transform-origin:0 5.76px;">profileKey</div>
<div class="t" style="left:724.00px;top:138.39px;font-size:6.80px;color:#b6b6b6;font-weight:400;transform:scaleY(1.2);transform-origin:0 5.76px;">Gender</div>
<div class="t" style="left:724.00px;top:149.69px;font-size:6.80px;color:#b6b6b6;font-weight:400;transform:scaleY(1.2);transform-origin:0 5.76px;">Income</div>
<div class="t" style="left:724.00px;top:160.99px;font-size:6.80px;color:#b6b6b6;font-weight:400;transform:scaleY(1.2);transform-origin:0 5.76px;">Education</div>
<div class="t" style="left:724.00px;top:172.29px;font-size:6.80px;color:#b6b6b6;font-weight:400;transform:scaleY(1.2);transform-origin:0 5.76px;">Occupation</div>
<div class="t" style="left:724.00px;top:183.59px;font-size:6.80px;color:#b6b6b6;font-weight:400;transform:scaleY(1.2);transform-origin:0 5.76px;">Marital Status</div>
<div class="t" style="left:724.00px;top:194.89px;font-size:6.80px;color:#b6b6b6;font-weight:400;transform:scaleY(1.2);transform-origin:0 5.76px;">Home Owner</div>
<div class="t" style="left:724.00px;top:206.19px;font-size:6.80px;color:#b6b6b6;font-weight:400;transform:scaleY(1.2);transform-origin:0 5.76px;">Cars</div>
<div class="t" style="left:724.00px;top:217.49px;font-size:6.80px;color:#b6b6b6;font-weight:400;transform:scaleY(1.2);transform-origin:0 5.76px;">Commute Distance</div>
<div class="t" style="left:724.00px;top:228.79px;font-size:6.80px;color:#b6b6b6;font-weight:400;transform:scaleY(1.2);transform-origin:0 5.76px;">Age</div>
<div class="t" style="left:724.00px;top:240.09px;font-size:6.80px;color:#b6b6b6;font-weight:400;transform:scaleY(1.2);transform-origin:0 5.76px;">Purchased Bike</div>
<div class="a" style="left:717px;top:254px;width:168px;height:17px;background:#545454;border:1px solid #3a3a3a"></div>
<svg class="a" style="left:722px;top:258px" width="10" height="8" viewBox="0 0 10 8"><path d="M2 2.8 L5 5.8 L8 2.8" stroke="#bdbdbd" stroke-width="0.9" fill="none"/></svg>
<svg class="a" style="left:734px;top:257px" width="10" height="11" viewBox="0 0 10 11">
 <rect x="0.3" y="1" width="8.5" height="9.2" fill="#5a5a5a"/>
 <path d="M3 1 V10.2 M5.7 1 V10.2" stroke="#505050" stroke-width="0.5"/>
 <rect x="2.6" y="1.5" width="1.3" height="1.3" fill="#e8e8e8"/>
 <rect x="2.6" y="3.6" width="1.5" height="6.6" fill="#3dbfae"/>
 <path d="M5.6 8.8 L6.6 9.9 L8.6 7.2" stroke="#5fc85f" stroke-width="0.7" fill="none"/>
</svg>
<div class="t" style="left:748.90px;top:260.73px;font-size:6.40px;color:#d8d8d8;font-weight:700;transform:scaleY(1.12);transform-origin:0 5.42px;">Column Selection</div>
<div class="a" style="left:888px;top:0px;width:1px;height:474px;background:#2a2a2a;"></div>
<div class="a" style="left:0px;top:473px;width:889px;height:1px;background:#262626;"></div>
<div class="a" style="left:0px;top:0px;width:1px;height:474px;background:#2e2e2e;"></div>
<div class="a" style="left:0px;top:19px;width:1px;height:331px;background:#555555;"></div>
<div class="a" style="left:711px;top:0px;width:178px;height:1px;background:#2a2a2a;"></div>
<div class="a" style="left:790px;top:0px;width:21px;height:1px;background:#5a5a5a;"></div>
</body></html>
